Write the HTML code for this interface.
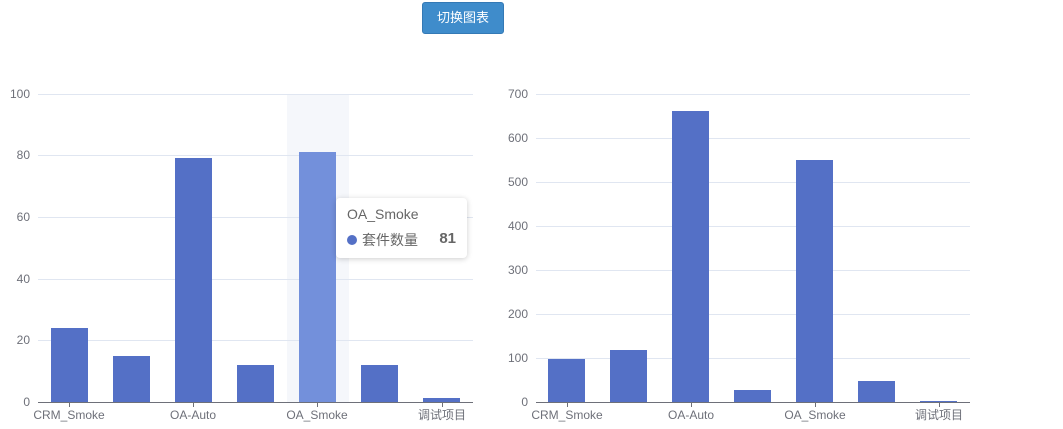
<!DOCTYPE html>
<html><head><meta charset="utf-8"><style>
body{margin:0;background:#fff;width:1063px;height:429px;overflow:hidden;position:relative;font-family:"Liberation Sans","Noto Sans CJK SC",sans-serif}
.btn{position:absolute;left:422px;top:2px;width:80px;height:30px;background:#3f8ccb;border:1px solid #3479b5;border-radius:3px;color:#fff;font-size:13px;line-height:30px;text-align:center}
.tip{position:absolute;left:336px;top:198px;width:131px;height:60px;background:#fff;border-radius:4px;box-shadow:0 1px 6px rgba(0,0,0,.2);font-size:14px;color:#666}
</style></head><body>
<div class="btn">切换图表</div>
<svg width="1063" height="429" style="position:absolute;left:0;top:0" font-family="Liberation Sans, Noto Sans CJK SC, sans-serif" font-size="12" fill="#6e7079">
<rect x="287" y="94" width="62" height="308" fill="#f3f5fa" opacity=".8"/>
<g stroke="#e0e6f1" stroke-width="1">
<line x1="38" x2="473" y1="94.5" y2="94.5"/><line x1="38" x2="473" y1="155.5" y2="155.5"/><line x1="38" x2="473" y1="217.5" y2="217.5"/><line x1="38" x2="473" y1="279.5" y2="279.5"/><line x1="38" x2="473" y1="340.5" y2="340.5"/>
<line x1="536" x2="970" y1="94.5" y2="94.5"/><line x1="536" x2="970" y1="138.5" y2="138.5"/><line x1="536" x2="970" y1="182.5" y2="182.5"/><line x1="536" x2="970" y1="226.5" y2="226.5"/><line x1="536" x2="970" y1="270.5" y2="270.5"/><line x1="536" x2="970" y1="314.5" y2="314.5"/><line x1="536" x2="970" y1="358.5" y2="358.5"/>
</g>
<g fill="#5470c6">
<rect x="51" y="328" width="37" height="74"/><rect x="113" y="356" width="37" height="46"/><rect x="175" y="158" width="37" height="244"/><rect x="237" y="365" width="37" height="37"/><rect x="299" y="152" width="37" height="250" fill="#7390db"/><rect x="361" y="365" width="37" height="37"/><rect x="423" y="398" width="37" height="4"/>
<rect x="548" y="359" width="37" height="43"/><rect x="610" y="350" width="37" height="52"/><rect x="672" y="111" width="37" height="291"/><rect x="734" y="390" width="37" height="12"/><rect x="796" y="160" width="37" height="242"/><rect x="858" y="381" width="37" height="21"/><rect x="920" y="401" width="37" height="1"/>
</g>
<g stroke="#6e7079" stroke-width="1">
<line x1="38" x2="473" y1="402.5" y2="402.5"/><line x1="69.5" x2="69.5" y1="402" y2="407"/><line x1="193.5" x2="193.5" y1="402" y2="407"/><line x1="317.5" x2="317.5" y1="402" y2="407"/><line x1="442.5" x2="442.5" y1="402" y2="407"/>
<line x1="536" x2="970" y1="402.5" y2="402.5"/><line x1="567.5" x2="567.5" y1="402" y2="407"/><line x1="691.5" x2="691.5" y1="402" y2="407"/><line x1="815.5" x2="815.5" y1="402" y2="407"/><line x1="939.5" x2="939.5" y1="402" y2="407"/>
</g>
<g text-anchor="end">
<text x="30" y="98">100</text><text x="30" y="159">80</text><text x="30" y="221">60</text><text x="30" y="283">40</text><text x="30" y="344">20</text><text x="30" y="406">0</text>
<text x="528" y="98">700</text><text x="528" y="142">600</text><text x="528" y="186">500</text><text x="528" y="230">400</text><text x="528" y="274">300</text><text x="528" y="318">200</text><text x="528" y="362">100</text><text x="528" y="406">0</text>
</g>
<g text-anchor="middle">
<text x="69" y="419">CRM_Smoke</text><text x="193" y="419">OA-Auto</text><text x="317" y="419">OA_Smoke</text><text x="442" y="419">调试项目</text>
<text x="567" y="419">CRM_Smoke</text><text x="691" y="419">OA-Auto</text><text x="815" y="419">OA_Smoke</text><text x="939" y="419">调试项目</text>
</g>
</svg>
<div class="tip">
<div style="position:absolute;left:11px;top:8px">OA_Smoke</div>
<div style="position:absolute;left:11px;top:37px;width:10px;height:10px;border-radius:50%;background:#5470c6"></div>
<div style="position:absolute;left:26px;top:32px;font-size:14px">套件数量</div>
<div style="position:absolute;right:11px;top:32px;font-weight:bold;color:#666;font-size:15px">81</div>
</div>
</body></html>
